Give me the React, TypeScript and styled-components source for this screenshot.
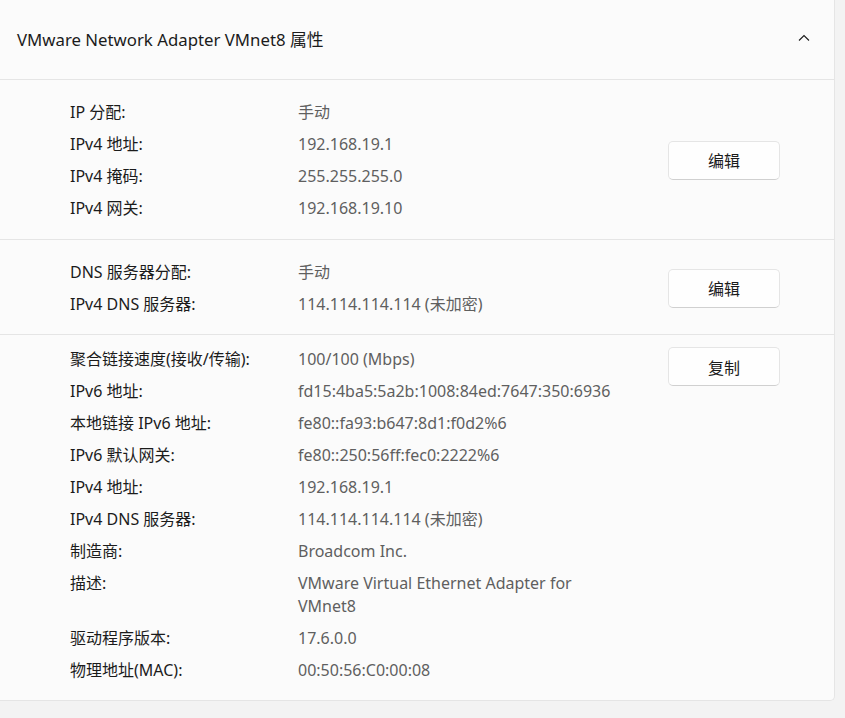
import React from "react";
import styled, { createGlobalStyle } from "styled-components";

const Global = createGlobalStyle`
  html, body { margin: 0; padding: 0; background: #f3f3f3; }
  body { font-family: "Segoe UI", "Noto Sans", "Noto Sans CJK SC", sans-serif; color: #1b1b1b; }
`;

const Card = styled.div`
  width: 835px;
  background: #fbfbfb;
  border-right: 1px solid #e5e5e5;
  border-bottom: 1px solid #e5e5e5;
  border-bottom-right-radius: 5px;
  box-sizing: border-box;
`;

const Header = styled.div`
  height: 79px;
  display: flex;
  align-items: center;
  justify-content: space-between;
  padding: 0 24px 0 17px;
  border-bottom: 1px solid #e5e5e5;
`;

const Title = styled.div`
  font-size: 16.8px;
  color: #1b1b1b;
  margin-top: -2px;
`;

const Chevron = styled.svg`
  width: 12px;
  height: 8px;
  margin-top: -4px;
`;

const Section = styled.div<{ $top: number; $bottom: number; $last?: boolean }>`
  display: flex;
  align-items: flex-start;
  padding: ${(p) => p.$top}px 0 ${(p) => p.$bottom}px 70px;
  border-bottom: ${(p) => (p.$last ? "none" : "1px solid #e5e5e5")};
`;

const Rows = styled.div`
  display: grid;
  grid-template-columns: 228px 320px;
  row-gap: 9px;
  padding-top: 1px;
  font-size: 16px;
  line-height: 23px;
`;

const Label = styled.div`
  color: #1b1b1b;
`;

const Value = styled.div`
  color: #5f5f5f;
`;

const Button = styled.button<{ $align: "center" | "flex-start" }>`
  align-self: ${(p) => p.$align};
  margin-left: 50px;
  width: 112px;
  height: 39px;
  background: #fefefe;
  border: 1px solid #e5e5e5;
  border-bottom-color: #d0d0d0;
  border-radius: 5px;
  font-family: inherit;
  font-size: 16px;
  color: #1b1b1b;
  padding: 0;
`;

type Row = [string, string];

const s1: Row[] = [
  ["IP 分配:", "手动"],
  ["IPv4 地址:", "192.168.19.1"],
  ["IPv4 掩码:", "255.255.255.0"],
  ["IPv4 网关:", "192.168.19.10"],
];

const s2: Row[] = [
  ["DNS 服务器分配:", "手动"],
  ["IPv4 DNS 服务器:", "114.114.114.114 (未加密)"],
];

const s3: Row[] = [
  ["聚合链接速度(接收/传输):", "100/100 (Mbps)"],
  ["IPv6 地址:", "fd15:4ba5:5a2b:1008:84ed:7647:350:6936"],
  ["本地链接 IPv6 地址:", "fe80::fa93:b647:8d1:f0d2%6"],
  ["IPv6 默认网关:", "fe80::250:56ff:fec0:2222%6"],
  ["IPv4 地址:", "192.168.19.1"],
  ["IPv4 DNS 服务器:", "114.114.114.114 (未加密)"],
  ["制造商:", "Broadcom Inc."],
  ["描述:", "VMware Virtual Ethernet Adapter for VMnet8"],
  ["驱动程序版本:", "17.6.0.0"],
  ["物理地址(MAC):", "00:50:56:C0:00:08"],
];

const RowList = ({ rows }: { rows: Row[] }) => (
  <Rows>
    {rows.map(([l, v], i) => (
      <React.Fragment key={i}>
        <Label>{l}</Label>
        <Value>{v}</Value>
      </React.Fragment>
    ))}
  </Rows>
);

export default function App() {
  return (
    <>
      <Global />
      <Card>
        <Header>
          <Title>VMware Network Adapter VMnet8 属性</Title>
          <Chevron viewBox="0 0 12 8">
            <polyline points="1,6.5 6,1.5 11,6.5" fill="none" stroke="#1b1b1b" strokeWidth="1.1" />
          </Chevron>
        </Header>
        <Section $top={20} $bottom={19}>
          <RowList rows={s1} />
          <Button $align="center">编辑</Button>
        </Section>
        <Section $top={20} $bottom={18}>
          <RowList rows={s2} />
          <Button $align="center">编辑</Button>
        </Section>
        <Section $top={12} $bottom={18} $last>
          <RowList rows={s3} />
          <Button $align="flex-start">复制</Button>
        </Section>
      </Card>
    </>
  );
}
